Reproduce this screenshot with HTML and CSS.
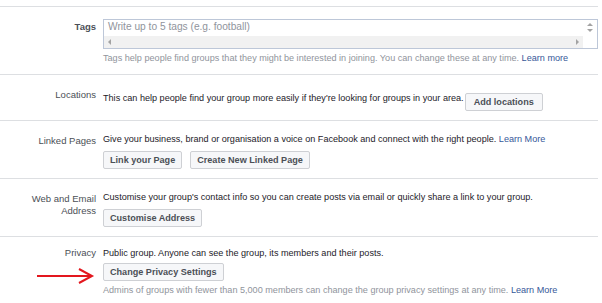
FILE: index.html
```html
<!DOCTYPE html>
<html lang="en">
<head>
    <meta charset="UTF-8">
    <meta name="viewport" content="width=device-width, initial-scale=1.0">
    <title>Group Settings</title>
    <link rel="stylesheet" href="styles.css">
</head>
<body>
    <div class="settings">

        <!-- Tags -->
        <div class="row">
            <div class="label label-strong">Tags</div>
            <div class="field">
                <div class="tag-box">
                    <div class="tag-input">
                        <div class="placeholder">Write up to 5 tags (e.g. football)</div>
                        <div class="hscroll">
                            <span class="tri tri-left"></span>
                            <span class="tri tri-right"></span>
                        </div>
                    </div>
                    <div class="vscroll">
                        <span class="tri tri-up"></span>
                        <span class="tri tri-down"></span>
                    </div>
                </div>
                <p class="hint">Tags help people find groups that they might be interested in joining. You can change these at any time. <a href="#">Learn more</a></p>
            </div>
        </div>

        <!-- Locations -->
        <div class="row">
            <div class="label">Locations</div>
            <div class="field">
                <p class="text text-inline">This can help people find your group more easily if they're looking for groups in your area.<a href="#" class="btn btn-inline">Add locations</a></p>
            </div>
        </div>

        <!-- Linked Pages -->
        <div class="row">
            <div class="label">Linked Pages</div>
            <div class="field">
                <p class="text">Give your business, brand or organisation a voice on Facebook and connect with the right people. <a href="#">Learn More</a></p>
                <div class="actions actions-tight">
                    <a href="#" class="btn">Link your Page</a>
                    <a href="#" class="btn">Create New Linked Page</a>
                </div>
            </div>
        </div>

        <!-- Web and Email -->
        <div class="row">
            <div class="label">Web and Email<br>Address</div>
            <div class="field">
                <p class="text">Customise your group's contact info so you can create posts via email or quickly share a link to your group.</p>
                <div class="actions">
                    <a href="#" class="btn">Customise Address</a>
                </div>
            </div>
        </div>

        <!-- Privacy -->
        <div class="row row-privacy">
            <div class="label">Privacy</div>
            <div class="field">
                <p class="text">Public group. Anyone can see the group, its members and their posts.</p>
                <div class="actions">
                    <a href="#" class="btn">Change Privacy Settings</a>
                </div>
                <p class="hint">Admins of groups with fewer than 5,000 members can change the group privacy settings at any time. <a href="#">Learn More</a></p>
            </div>
            <svg class="pointer" width="60" height="18" viewBox="0 0 60 18">
                <path d="M1 9 H55" stroke="#e3171e" stroke-width="2" fill="none"/>
                <path d="M43 2 L56 9 L43 16" stroke="#e3171e" stroke-width="2" fill="none"/>
            </svg>
        </div>

    </div>
</body>
</html>
```

FILE: styles.css
```css
body {
    margin: 0;
    background: #fff;
    font-family: 'Liberation Sans', Arial, sans-serif;
    font-size: 9.1px;
    line-height: 12.8px;
    color: #1d2129;
}

.settings {
    margin-top: 6px;
    width: 598px;
}

.row {
    display: grid;
    grid-template-columns: 96px 1fr;
    column-gap: 7px;
    padding: 12px 0 9px;
    border-top: 1px solid #dddfe2;
    position: relative;
}

.label {
    text-align: right;
    color: #4b4f56;
    padding-top: 2px;
    font-size: 9.5px;
}

.label-strong {
    font-weight: bold;
}

.text, .hint {
    margin: 0;
}

.hint {
    margin-top: 3px;
    color: #90949c;
}

a {
    color: #365899;
    text-decoration: none;
}

.actions {
    display: flex;
    gap: 8px;
    margin-top: 6px;
}

.actions-tight {
    margin-top: 5px;
}

.btn {
    display: inline-block;
    box-sizing: border-box;
    height: 18px;
    line-height: 16px;
    padding: 0 6px;
    background: #f6f7f9;
    border: 1px solid #ced0d4;
    border-radius: 2px;
    color: #4b4f56;
    font-weight: bold;
}

.text-inline {
    margin-top: 5px;
}

.btn-inline {
    margin-left: 1px;
    padding: 0 8px;
    vertical-align: -4px;
}

/* tag field mimics a textarea with scrollbars */
.tag-box {
    display: flex;
    height: 30px;
    box-sizing: border-box;
    border: 1px solid #bdc7d8;
}

.tag-input {
    flex: 1;
    display: flex;
    flex-direction: column;
}

.placeholder {
    flex: 1;
    padding: 1px 4px 0;
    font-size: 10.2px;
    color: #90949c;
}

.hscroll {
    height: 12px;
    background: #f1f1f1;
    display: flex;
    align-items: center;
    justify-content: space-between;
    padding: 0 4px;
}

.vscroll {
    width: 14px;
    display: flex;
    flex-direction: column;
    align-items: center;
    gap: 3px;
    padding-top: 3px;
}

.tri {
    width: 0;
    height: 0;
    border: 3px solid transparent;
}

.tri-left {
    border-left: 0;
    border-right-color: #a3a3a3;
}

.tri-right {
    border-right: 0;
    border-left-color: #a3a3a3;
}

.tri-up {
    border-top: 0;
    border-bottom-color: #a3a3a3;
}

.tri-down {
    border-bottom: 0;
    border-top-color: #a3a3a3;
}

.row-privacy {
    padding-top: 10px;
}

.row-privacy .label {
    padding-top: 0;
}

.row-privacy .actions {
    margin-top: 3px;
}

.pointer {
    position: absolute;
    left: 36px;
    top: 30px;
}
```
